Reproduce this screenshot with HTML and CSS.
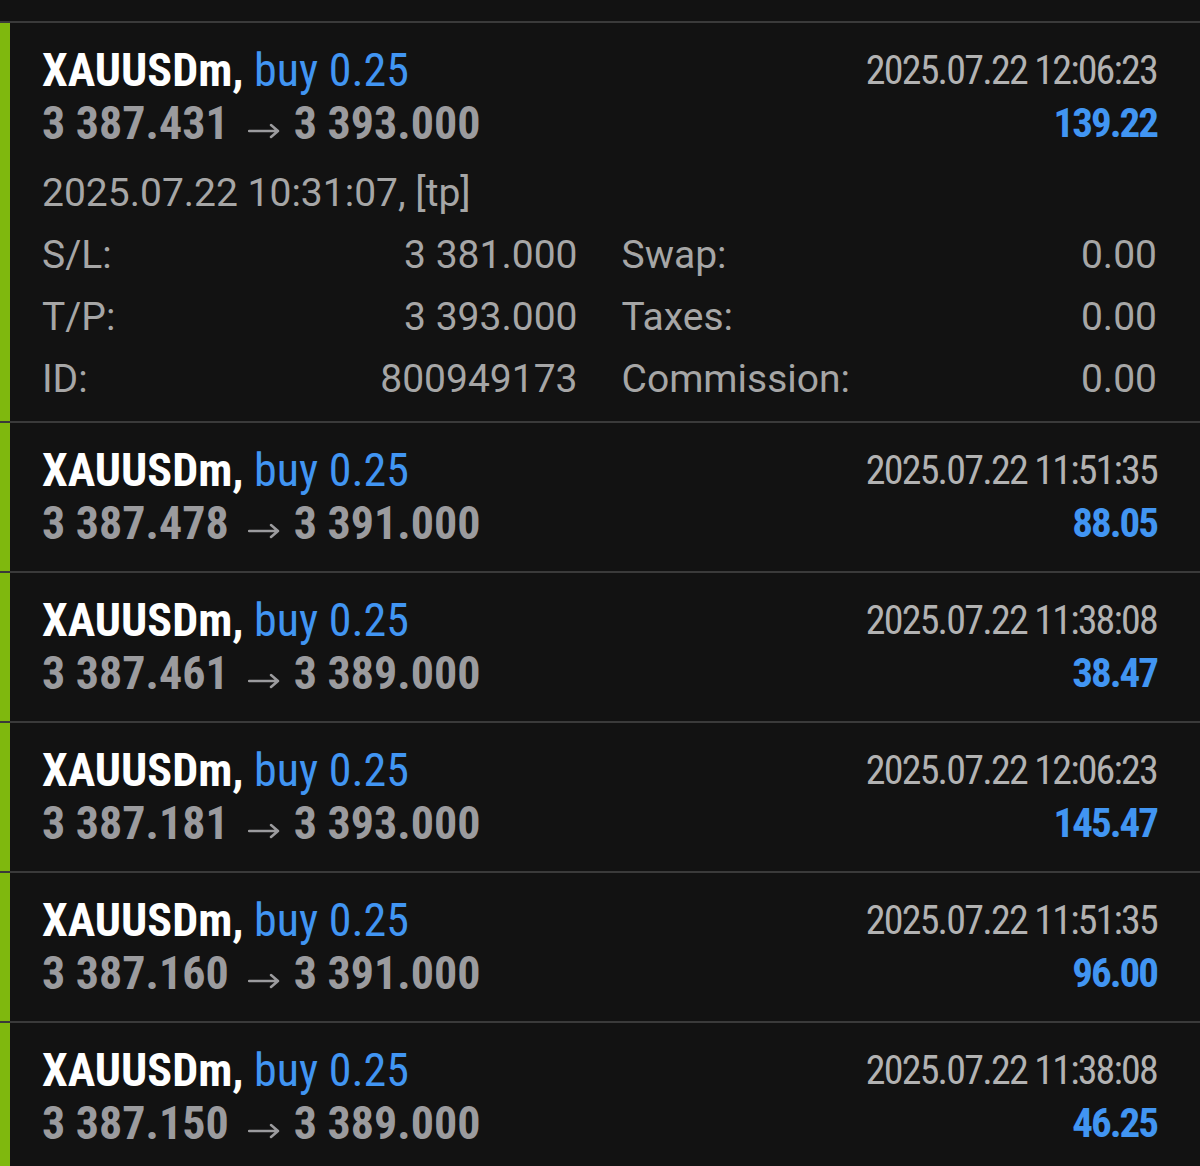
FILE: index.html
```html
<!DOCTYPE html>
<html>
<head>
<meta charset="utf-8">
<link rel="stylesheet" href="styles.css">
</head>
<body>
<div class="top"></div>
<ul class="deals">
  <li class="deal">
    <div class="deal-inner">
      <div class="head">
        <div class="left">
          <div class="title"><span class="sym">XAUUSDm,</span> <span class="side">buy 0.25</span></div>
          <div class="prices">3 387.431<svg class="arrow" width="32" height="16" viewBox="0 0 32 16"><path d="M1 8H30M23 2L30 8L23 14"/></svg>3 393.000</div>
        </div>
        <div class="right">
          <div class="time">2025.07.22 12:06:23</div>
          <div class="profit">139.22</div>
        </div>
      </div>
      <div class="details">
        <div class="open">2025.07.22 10:31:07, [tp]</div>
        <div class="grid">
          <div class="cell"><span>S/L:</span><span>3 381.000</span></div>
          <div class="cell"><span>Swap:</span><span>0.00</span></div>
          <div class="cell"><span>T/P:</span><span>3 393.000</span></div>
          <div class="cell"><span>Taxes:</span><span>0.00</span></div>
          <div class="cell"><span>ID:</span><span>800949173</span></div>
          <div class="cell"><span>Commission:</span><span>0.00</span></div>
        </div>
      </div>
    </div>
  </li>
  <li class="deal">
    <div class="deal-inner">
      <div class="head">
        <div class="left">
          <div class="title"><span class="sym">XAUUSDm,</span> <span class="side">buy 0.25</span></div>
          <div class="prices">3 387.478<svg class="arrow" width="32" height="16" viewBox="0 0 32 16"><path d="M1 8H30M23 2L30 8L23 14"/></svg>3 391.000</div>
        </div>
        <div class="right">
          <div class="time">2025.07.22 11:51:35</div>
          <div class="profit">88.05</div>
        </div>
      </div>
    </div>
  </li>
  <li class="deal">
    <div class="deal-inner">
      <div class="head">
        <div class="left">
          <div class="title"><span class="sym">XAUUSDm,</span> <span class="side">buy 0.25</span></div>
          <div class="prices">3 387.461<svg class="arrow" width="32" height="16" viewBox="0 0 32 16"><path d="M1 8H30M23 2L30 8L23 14"/></svg>3 389.000</div>
        </div>
        <div class="right">
          <div class="time">2025.07.22 11:38:08</div>
          <div class="profit">38.47</div>
        </div>
      </div>
    </div>
  </li>
  <li class="deal">
    <div class="deal-inner">
      <div class="head">
        <div class="left">
          <div class="title"><span class="sym">XAUUSDm,</span> <span class="side">buy 0.25</span></div>
          <div class="prices">3 387.181<svg class="arrow" width="32" height="16" viewBox="0 0 32 16"><path d="M1 8H30M23 2L30 8L23 14"/></svg>3 393.000</div>
        </div>
        <div class="right">
          <div class="time">2025.07.22 12:06:23</div>
          <div class="profit">145.47</div>
        </div>
      </div>
    </div>
  </li>
  <li class="deal">
    <div class="deal-inner">
      <div class="head">
        <div class="left">
          <div class="title"><span class="sym">XAUUSDm,</span> <span class="side">buy 0.25</span></div>
          <div class="prices">3 387.160<svg class="arrow" width="32" height="16" viewBox="0 0 32 16"><path d="M1 8H30M23 2L30 8L23 14"/></svg>3 391.000</div>
        </div>
        <div class="right">
          <div class="time">2025.07.22 11:51:35</div>
          <div class="profit">96.00</div>
        </div>
      </div>
    </div>
  </li>
  <li class="deal">
    <div class="deal-inner">
      <div class="head">
        <div class="left">
          <div class="title"><span class="sym">XAUUSDm,</span> <span class="side">buy 0.25</span></div>
          <div class="prices">3 387.150<svg class="arrow" width="32" height="16" viewBox="0 0 32 16"><path d="M1 8H30M23 2L30 8L23 14"/></svg>3 389.000</div>
        </div>
        <div class="right">
          <div class="time">2025.07.22 11:38:08</div>
          <div class="profit">46.25</div>
        </div>
      </div>
    </div>
  </li>
</ul>
</body>
</html>
```
FILE: styles.css
```css
html, body {
  margin: 0;
  padding: 0;
  background: #121212;
}
body {
  width: 1200px;
  height: 1166px;
  overflow: hidden;
  font-family: "Roboto Condensed", Roboto, sans-serif;
}
.top {
  height: 21px;
}
.deals {
  list-style: none;
  margin: 0;
  padding: 0;
}
.deal {
  border-top: 2px solid #3a3a3a;
}
.deal-inner {
  border-left: 10px solid #7fb80e;
  padding: 21px 43px 0 32px;
  height: 127px;
}
.deal:first-child .deal-inner {
  height: 377px;
}
.head {
  display: flex;
  justify-content: space-between;
}
.left, .right {
  display: flex;
  flex-direction: column;
}
.right {
  align-items: flex-end;
}
.title, .prices, .time, .profit {
  line-height: 53px;
  height: 53px;
  white-space: nowrap;
}
.title {
  font-size: 46px;
}
.sym {
  color: #ffffff;
  font-weight: 700;
}
.side {
  color: #4195f2;
  font-weight: 400;
}
.prices {
  font-size: 46px;
  font-weight: 700;
  color: #9b9b9e;
}
.arrow {
  vertical-align: baseline;
  margin: 0 14px 0 19px;
  fill: none;
  stroke: #9b9b9e;
  stroke-width: 2.5;
  stroke-linecap: round;
  stroke-linejoin: round;
}
.time {
  font-size: 40px;
  letter-spacing: -1.8px;
  color: #b2b2b2;
}
.profit {
  font-size: 41px;
  letter-spacing: -2px;
  font-weight: 700;
  color: #4195f2;
}
.details {
  font-family: Roboto, sans-serif;
  font-size: 39px;
  color: #a6a6a6;
}
.open {
  line-height: 62px;
  margin-top: 12px;
}
.grid {
  display: grid;
  grid-template-columns: 1fr 1fr;
  column-gap: 44px;
}
.cell {
  display: flex;
  justify-content: space-between;
  line-height: 62px;
  white-space: nowrap;
}
```
